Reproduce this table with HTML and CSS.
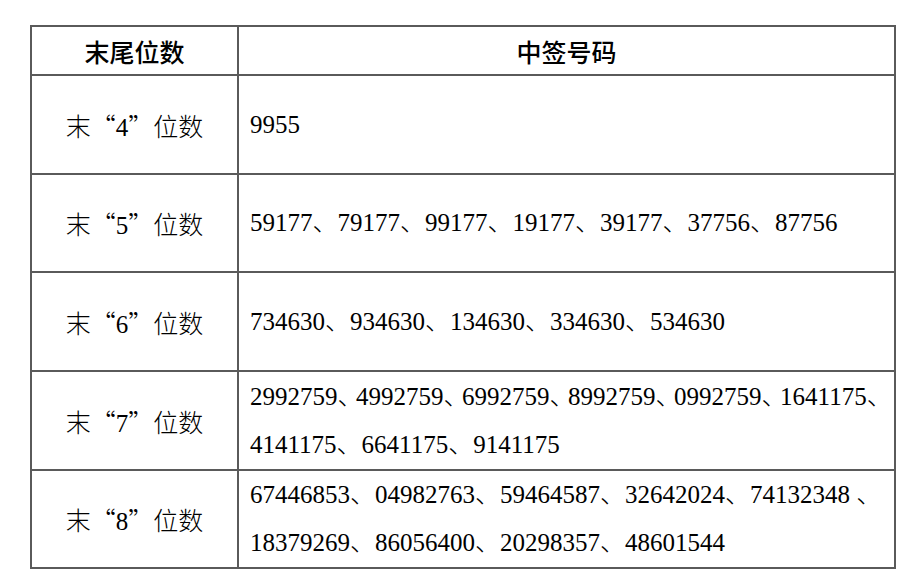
FILE: index.html
```html
<!DOCTYPE html>
<html>
<head>
<meta charset="utf-8">
<title>中签号码</title>
<link rel="stylesheet" href="styles.css">
</head>
<body>
<table class="lottery">
  <colgroup>
    <col class="col-label">
    <col class="col-nums">
  </colgroup>
  <thead>
    <tr class="row-head">
      <th>末尾位数</th>
      <th>中签号码</th>
    </tr>
  </thead>
  <tbody>
    <tr class="row-a">
      <td class="label">末“<span class="num">4</span>”位数</td>
      <td class="nums">9955</td>
    </tr>
    <tr class="row-b">
      <td class="label">末“<span class="num">5</span>”位数</td>
      <td class="nums">59177<span class="cjk">、</span>79177<span class="cjk">、</span>99177<span class="cjk">、</span>19177<span class="cjk">、</span>39177<span class="cjk">、</span>37756<span class="cjk">、</span>87756</td>
    </tr>
    <tr class="row-a">
      <td class="label">末“<span class="num">6</span>”位数</td>
      <td class="nums">734630<span class="cjk">、</span>934630<span class="cjk">、</span>134630<span class="cjk">、</span>334630<span class="cjk">、</span>534630</td>
    </tr>
    <tr class="row-a">
      <td class="label">末“<span class="num">7</span>”位数</td>
      <td class="nums">2992759<span class="cjk dun">、</span>4992759<span class="cjk dun">、</span>6992759<span class="cjk dun">、</span>8992759<span class="cjk dun">、</span>0992759<span class="cjk dun">、</span>1641175<span class="cjk dun">、</span><br>4141175<span class="cjk">、</span>6641175<span class="cjk">、</span>9141175</td>
    </tr>
    <tr class="row-last">
      <td class="label">末“<span class="num">8</span>”位数</td>
      <td class="nums">67446853<span class="cjk">、</span>04982763<span class="cjk">、</span>59464587<span class="cjk">、</span>32642024<span class="cjk">、</span>74132348 <span class="cjk">、</span><br>18379269<span class="cjk">、</span>86056400<span class="cjk">、</span>20298357<span class="cjk">、</span>48601544</td>
    </tr>
  </tbody>
</table>
</body>
</html>
```

FILE: styles.css
```css
html, body {
  margin: 0;
  padding: 0;
  background: #ffffff;
}

body {
  padding: 25px 0 0 30px;
}

.lottery {
  border-collapse: collapse;
  width: 866px;
  table-layout: fixed;
  color: #000000;
}

.col-label {
  width: 207px;
}

.lottery th,
.lottery td {
  border: 2px solid #5a5a5a;
  padding: 0;
  vertical-align: middle;
}

.lottery th {
  font-family: "Noto Sans CJK SC", sans-serif;
  font-weight: 500;
  font-size: 25px;
  line-height: 30px;
  text-align: center;
}

.row-head {
  height: 49px;
}

.row-a {
  height: 99px;
}

.row-b {
  height: 98px;
}

.row-last {
  height: 96px;
}

.label {
  font-family: "Noto Sans CJK SC", sans-serif;
  font-weight: 300;
  font-size: 25px;
  line-height: 30px;
  text-align: center;
  white-space: nowrap;
}

.num {
  font-family: "Liberation Serif", "Times New Roman", Times, serif;
  font-weight: 400;
  line-height: 1;
}

.nums {
  font-family: "Liberation Serif", "Times New Roman", Times, serif;
  font-size: 25px;
  line-height: 48px;
  text-align: left;
  padding-left: 11px !important;
  white-space: nowrap;
}

.cjk {
  font-family: "Noto Sans CJK SC", sans-serif;
  font-weight: 300;
  line-height: 1;
}

.dun {
  letter-spacing: -6.5px;
}
```
